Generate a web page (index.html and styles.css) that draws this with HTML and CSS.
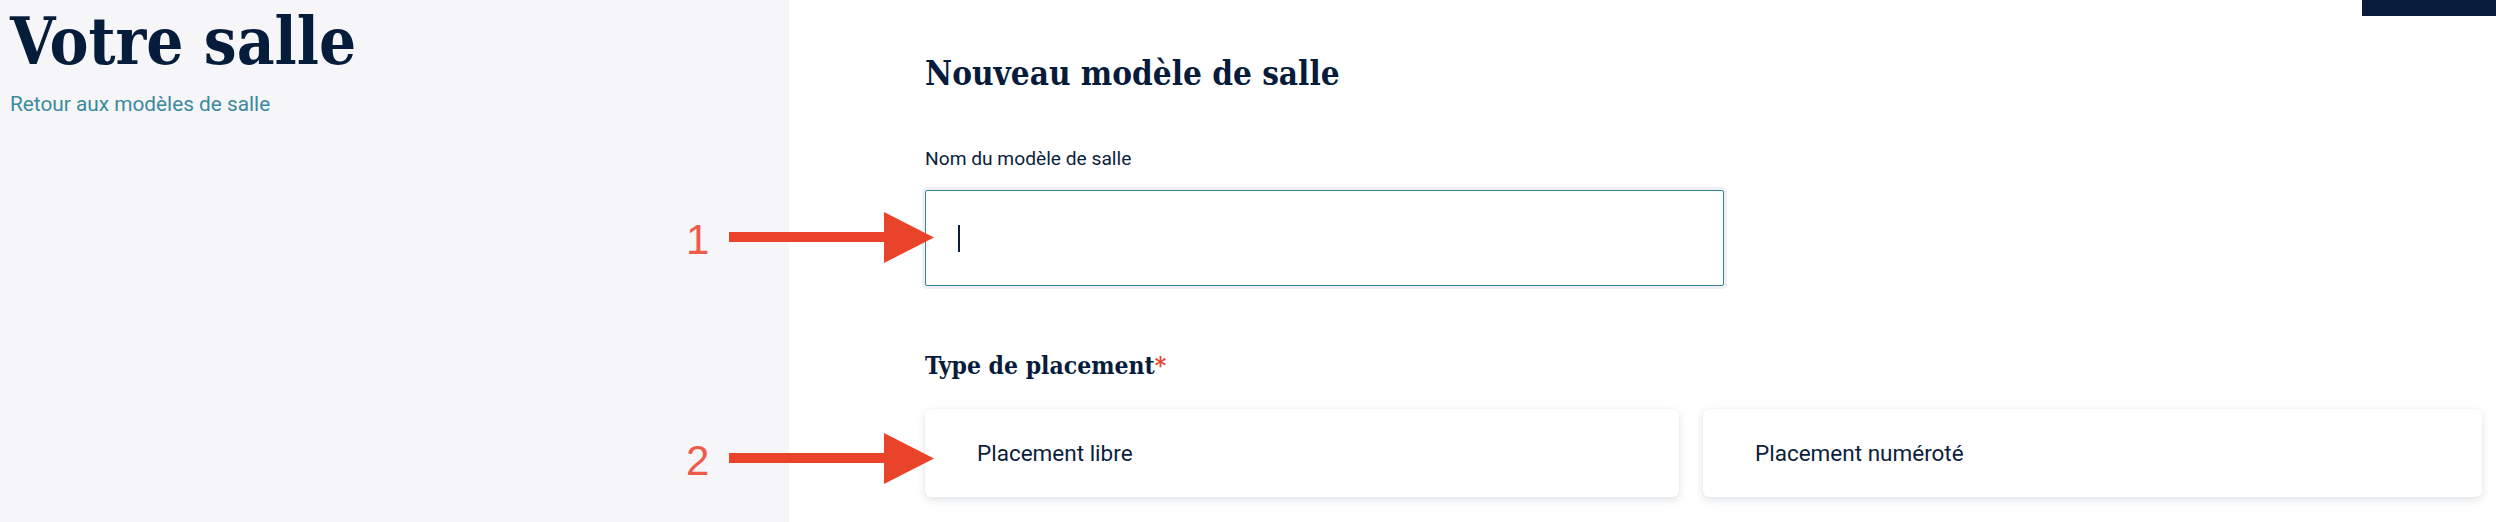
FILE: index.html
```html
<!DOCTYPE html>
<html lang="fr">
<head>
<meta charset="utf-8">
<title>Nouveau modèle de salle</title>
<link rel="stylesheet" href="styles.css">
</head>
<body>
<div class="page">
  <aside class="sidebar">
    <h1 class="page-title">Votre salle</h1>
    <a class="back-link" href="#">Retour aux modèles de salle</a>
  </aside>
  <main class="main">
    <div class="topbar"><div class="topbar-btn"></div></div>
    <div class="content">
      <h2 class="form-title">Nouveau modèle de salle</h2>
      <label class="field-label">Nom du modèle de salle</label>
      <div class="text-input" role="textbox"><span class="caret"></span></div>
      <h3 class="section-title">Type de placement<span class="required">*</span></h3>
      <div class="choices">
        <div class="choice">Placement libre</div>
        <div class="choice">Placement numéroté</div>
      </div>
    </div>
  </main>

  <div class="callout callout-1">
    <span class="callout-num">1</span>
    <svg class="callout-arrow" width="205" height="51" viewBox="0 0 205 51"><rect x="0" y="20" width="158" height="10" fill="#e9432a"/><polygon points="155,0 205,25.5 155,51" fill="#e9432a"/></svg>
  </div>
  <div class="callout callout-2">
    <span class="callout-num">2</span>
    <svg class="callout-arrow" width="205" height="51" viewBox="0 0 205 51"><rect x="0" y="20" width="158" height="10" fill="#e9432a"/><polygon points="155,0 205,25.5 155,51" fill="#e9432a"/></svg>
  </div>
</div>
</body>
</html>
```
FILE: styles.css
```css
* { box-sizing: border-box; }
html, body { margin: 0; padding: 0; background: #ffffff; }
body { font-family: Roboto, "Liberation Sans", sans-serif; color: #0b1e3c; }

.page {
  position: relative;
  display: grid;
  grid-template-columns: 789px 1fr;
  min-height: 522px;
  width: 2496px;
}

.sidebar {
  background: #f6f5f8;
  padding: 8px 10px;
}
.page-title {
  margin: 0;
  font-family: "DejaVu Serif Condensed", "DejaVu Serif", serif;
  font-stretch: condensed;
  font-weight: 700;
  font-size: 65px;
  line-height: 66px;
  color: #061c3b;
}
.back-link {
  display: block;
  margin-top: 18px;
  font-size: 20.8px;
  line-height: 24px;
  color: #3c8a9d;
  text-decoration: none;
}

.main { display: flex; flex-direction: column; }
.topbar { display: flex; justify-content: flex-end; }
.topbar-btn { width: 134px; height: 16px; background: #071d3b; }

.content {
  padding: 38px 14px 0 136px;
  display: flex;
  flex-direction: column;
  align-items: flex-start;
}
.form-title {
  margin: 0;
  font-family: "DejaVu Serif Condensed", "DejaVu Serif", serif;
  font-stretch: condensed;
  font-weight: 700;
  font-size: 33px;
  line-height: 39px;
  color: #071c3b;
}
.field-label {
  margin-top: 55px;
  font-size: 19.2px;
  line-height: 22px;
  color: #0b1e3c;
}
.text-input {
  margin-top: 20px;
  width: 799px;
  height: 96px;
  border: 1px solid #3a8296;
  border-radius: 2px;
  box-shadow: 0 0 0 3px #eef0f3;
  background: #fff;
  display: flex;
  align-items: center;
  padding-left: 32px;
}
.caret { width: 2px; height: 27px; background: #0b1e3c; }

.section-title {
  margin: 66px 0 0;
  font-family: "DejaVu Serif Condensed", "DejaVu Serif", serif;
  font-stretch: condensed;
  font-weight: 700;
  font-size: 24.5px;
  line-height: 28px;
  color: #071c3b;
}
.required { color: #e5432c; }

.choices {
  margin-top: 29px;
  align-self: stretch;
  display: grid;
  grid-template-columns: 754fr 779fr;
  gap: 24px;
}
.choice {
  height: 88px;
  background: #fff;
  border-radius: 6px;
  box-shadow: 0 3px 8px rgba(11, 30, 60, 0.12), 0 0 2px rgba(11, 30, 60, 0.06);
  display: flex;
  align-items: center;
  padding-left: 52px;
  font-size: 22.5px;
  color: #0b1e3c;
}

.callout {
  position: absolute;
  left: 686px;
  display: flex;
  align-items: center;
  gap: 20px;
}
.callout-1 { top: 212px; }
.callout-2 { top: 433px; }
.callout-num {
  margin-top: 4px;
  font-family: "Liberation Sans", Arial, sans-serif;
  font-size: 42px;
  line-height: 42px;
  color: #ef5a4a;
}
.callout-arrow { display: block; }
```
